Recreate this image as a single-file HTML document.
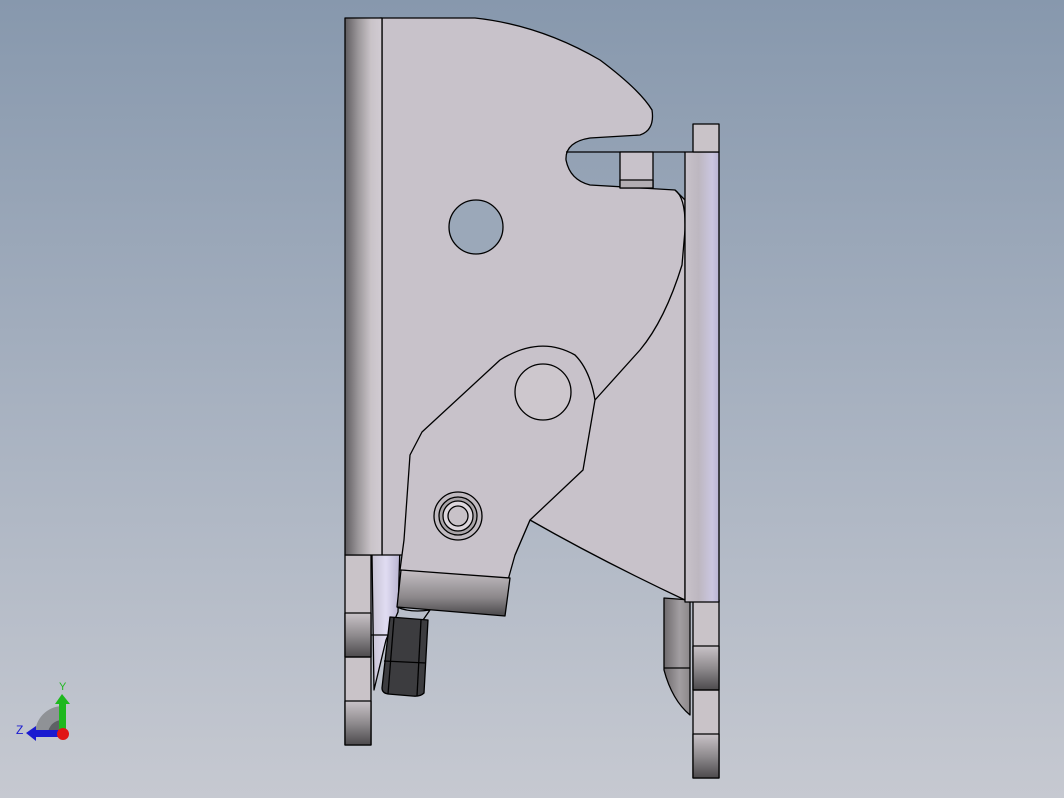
<!DOCTYPE html>
<html><head><meta charset="utf-8"><style>
html,body{margin:0;padding:0;width:1064px;height:798px;overflow:hidden}
</style></head><body>
<svg width="1064" height="798" viewBox="0 0 1064 798" xmlns="http://www.w3.org/2000/svg">
<defs>
<linearGradient id="bg" x1="0" y1="0" x2="0" y2="1">
<stop offset="0" stop-color="#8798ad"/><stop offset="0.5" stop-color="#a7b1c0"/><stop offset="1" stop-color="#c6c9d1"/></linearGradient>
<linearGradient id="lbar" x1="0" y1="0" x2="1" y2="0">
<stop offset="0" stop-color="#5f5c5f"/><stop offset="0.35" stop-color="#9a9699"/><stop offset="0.7" stop-color="#c9c3c8"/><stop offset="1" stop-color="#d2ccd3"/></linearGradient>
<linearGradient id="rbar" x1="0" y1="0" x2="1" y2="0">
<stop offset="0" stop-color="#c8c2ca"/><stop offset="0.4" stop-color="#bdb7c0"/><stop offset="0.8" stop-color="#cbc6e0"/><stop offset="1" stop-color="#b9b4d4"/></linearGradient>
<linearGradient id="vshade" x1="0" y1="0" x2="0" y2="1">
<stop offset="0" stop-color="#c9c3c8"/><stop offset="0.5" stop-color="#8f8b8e"/><stop offset="1" stop-color="#4c4a4c"/></linearGradient>
<linearGradient id="blk" x1="0" y1="0" x2="0" y2="1">
<stop offset="0" stop-color="#c5bfc4"/><stop offset="0.6" stop-color="#8b878a"/><stop offset="1" stop-color="#4a484a"/></linearGradient>
<linearGradient id="hshade" x1="0" y1="0" x2="1" y2="0">
<stop offset="0" stop-color="#6e6a6d"/><stop offset="0.6" stop-color="#a29ea1"/><stop offset="1" stop-color="#8c888b"/></linearGradient>
<linearGradient id="lav" x1="0" y1="0" x2="1" y2="0">
<stop offset="0" stop-color="#c8c4d4"/><stop offset="0.5" stop-color="#e0dcf2"/><stop offset="1" stop-color="#b8b3d0"/></linearGradient>
</defs>
<rect width="1064" height="798" fill="url(#bg)"/>
<g stroke="#000" stroke-width="1.3" stroke-linejoin="round">
<!-- right lower bracket -->
<path d="M664,598 L690,600 L690,715 Q672,700 664,670 Z" fill="url(#hshade)"/>
<line x1="664" y1="668" x2="690" y2="668"/>
<rect x="693" y="600" width="26" height="178" fill="#c9c3c8"/>
<rect x="693" y="646" width="26" height="44" fill="url(#vshade)"/>
<rect x="693" y="734" width="26" height="44" fill="url(#vshade)"/>
<line x1="693" y1="690" x2="719" y2="690"/>
<!-- left lower bracket -->
<path d="M372,555 L400,545 L398,612 L386,640 L374,690 Z" fill="url(#lav)"/>
<rect x="345" y="555" width="26" height="190" fill="#c9c3c8"/>
<rect x="345" y="613" width="26" height="44" fill="url(#vshade)"/>
<rect x="345" y="701" width="26" height="44" fill="url(#vshade)"/>
<line x1="345" y1="657" x2="371" y2="657"/>
<line x1="371" y1="635" x2="388" y2="635"/>
<!-- main plate -->
<path d="M380,18 L475,18 Q540,25 600,60 Q640,90 652,110 Q655,130 640,135 L590,138 Q565,142 566,160 Q570,180 590,185 L675,190 L685,200 L685,600 Q600,560 530,520 L515,555 L400,555 L382,555 L382,18 Z" fill="#c8c2ca"/>
<path d="M675,190 Q686,198 685,230 L682,265 Q665,320 640,350 L595,400" fill="none"/>
<!-- tabs in notch -->
<line x1="566" y1="152" x2="685" y2="152"/>
<rect x="620" y="152" width="33" height="36" fill="#c8c2ca"/>
<rect x="620" y="180" width="33" height="8" fill="#b3aeb2"/>
<!-- right bar -->
<rect x="685" y="152" width="34" height="450" fill="url(#rbar)"/>
<rect x="693" y="124" width="26" height="28" fill="#c9c3c8"/>
<!-- left bar -->
<rect x="345" y="18" width="37" height="537" fill="url(#lbar)"/>
<!-- hole -->
<circle cx="476" cy="227" r="27" fill="#9ba8b9"/>
<!-- arm -->
<path d="M595,400 L583,470 L530,520 L515,555 L508,580 L400,570 L404,540 L410,455 L422,432 L500,360 Q540,335 575,355 Q590,370 595,400 Z" fill="#c8c2ca"/>
<circle cx="543" cy="392" r="28" fill="#cdc7cd"/>
<circle cx="458" cy="516" r="24" fill="#c0bac0"/>
<circle cx="458" cy="516" r="19" fill="#a9a4a8"/>
<circle cx="458" cy="516" r="15" fill="#dcd6dc"/>
<circle cx="458" cy="516" r="10" fill="#c8c2c8"/>
<!-- lower block -->
<path d="M401,570 L510,578 L505,616 L397,607 Z" fill="url(#blk)"/>
<path d="M397,607 Q410,613 430,610 L423,620" fill="none"/>
<!-- black pad -->
<path d="M390,617 L428,620 L424,693 Q420,697 412,696 L388,694 Q382,693 382,688 Z" fill="#3c3c3f"/>
<line x1="384" y1="661" x2="426" y2="663"/>
<line x1="394" y1="618" x2="388" y2="694"/>
<line x1="421" y1="620" x2="417" y2="696"/>
</g>
<!-- axis triad -->
<path d="M62,706 A28,28 0 0 0 35,734 L62,734 Z" fill="#8f9296"/>
<path d="M62,720 A14,14 0 0 0 48,734 L62,734 Z" fill="#5e6165"/>
<rect x="59" y="702" width="7" height="30" fill="#1eb81e"/>
<path d="M55,704 L62,694 L70,704 Z" fill="#1eb81e"/>
<rect x="34" y="730" width="28" height="7" fill="#1a1ad0"/>
<path d="M36,726 L26,733 L36,741 Z" fill="#1a1ad0"/>
<circle cx="63" cy="734" r="6" fill="#e01515"/>
<text x="59" y="690" font-family="Liberation Sans,sans-serif" font-size="11" fill="#1eb81e">Y</text>
<text x="16" y="734" font-family="Liberation Sans,sans-serif" font-size="12" fill="#1a1ad0">Z</text>
</svg>
</body></html>
